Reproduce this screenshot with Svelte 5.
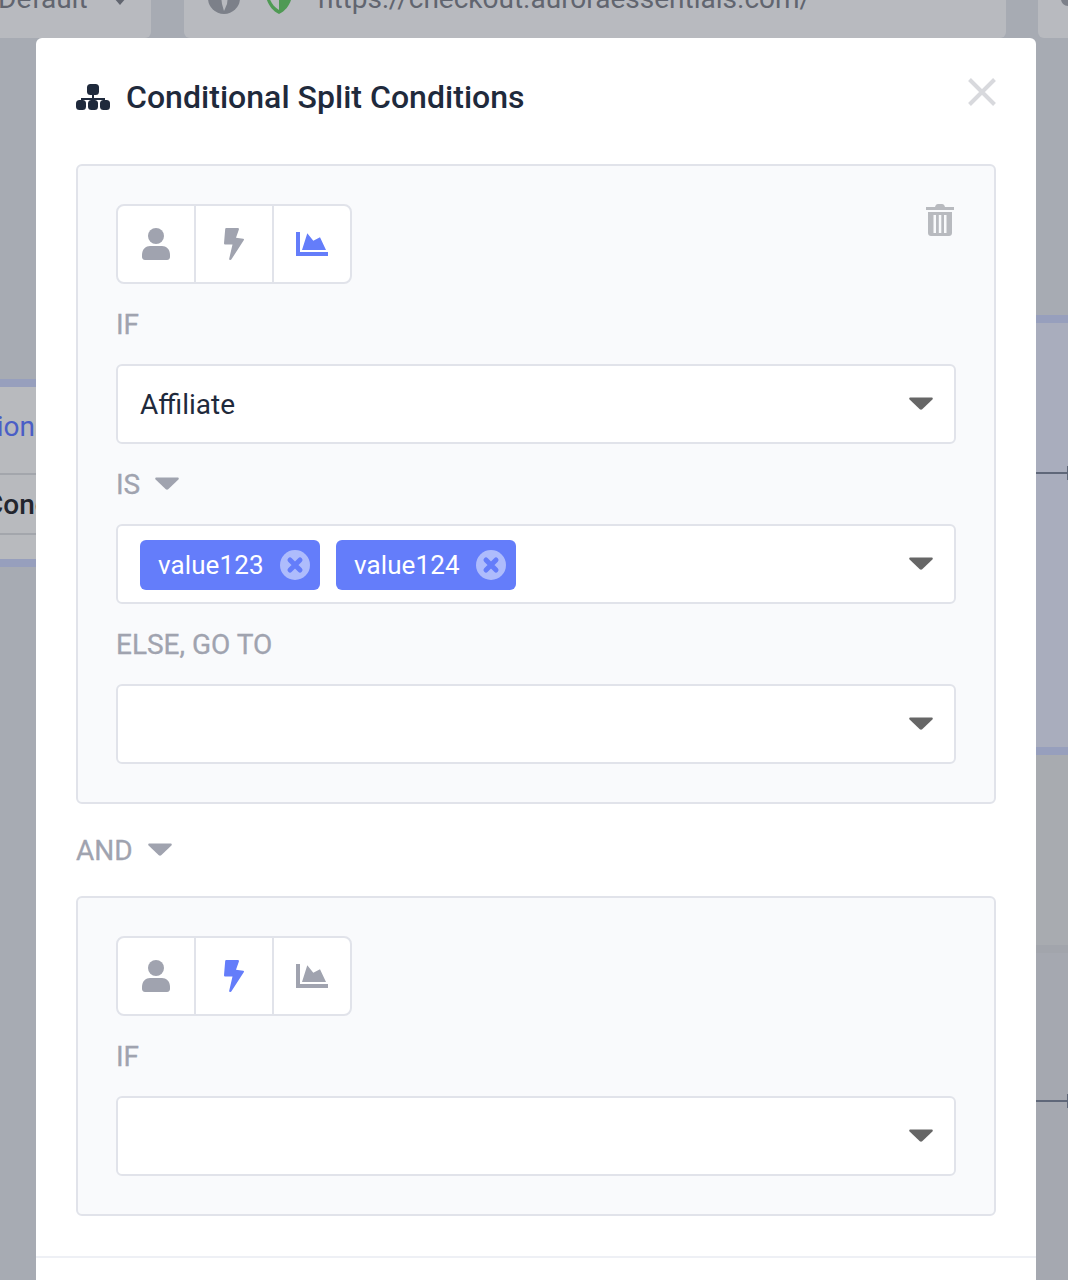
<script>
  const first = 'chart';
  const second = 'bolt';
</script>

{#snippet caret(cls)}
  <svg class={cls} viewBox="0 0 24 13" aria-hidden="true"><path d="M1.500 0.500h21c1.200 0 1.700 1.300.9 2.100L13.200 12.200c-.7.6-1.700.6-2.400 0L.6 2.600C-.2 1.800.3.500 1.500.500z" /></svg>
{/snippet}

{#snippet tabset(active)}
  <div class="tabs">
    <div class="tab">
      <svg class="ico" class:on={active === 'user'} viewBox="0 0 28 32"><circle cx="14" cy="8" r="8" /><path d="M0 27c0-6 4-9 8-9h12c4 0 8 3 8 9v2c0 1.500-1 3-3 3H3c-2 0-3-1.500-3-3z" /></svg>
    </div>
    <div class="tab">
      <svg class="ico" class:on={active === 'bolt'} viewBox="0 0 20 32"><path d="M2.200 0h11.600c.8 0 1.300.7 1.100 1.500L12 9.800l7.200.9c.7.1 1 .8.7 1.400L7.300 31.500c-.7 1-2.300.4-2.100-.8L8.500 16.500H1.200C.4 16.500 0 15.800 0 15.200L1.200 1C1.300.4 1.600 0 2.200 0z" /></svg>
    </div>
    <div class="tab">
      <svg class="ico" class:on={active === 'chart'} viewBox="0 0 32 24"><path d="M0 0h4v20h28v4H0z" /><path d="M6 18 11.300 1.300 17.300 8.700 24 5.300 30 18z" /></svg>
    </div>
  </div>
{/snippet}

{#snippet tag(text)}
  <span class="tag">
    <span>{text}</span>
    <svg viewBox="0 0 30 30"><circle cx="15" cy="15" r="15" fill="#aebcfc" /><path d="M10 10 20 20M20 10 10 20" stroke="#647dfa" stroke-width="5" stroke-linecap="round" /></svg>
  </span>
{/snippet}

<div class="backdrop" aria-hidden="true">
  <div class="card c1"><span>Default</span><svg class="mini" viewBox="0 0 12 7"><path d="M0 0h12L6 7z" /></svg></div>
  <div class="card c2">
    <svg class="globe" viewBox="0 0 32 32"><circle cx="16" cy="16" r="16" fill="#7c8089" /><path d="M13 14h7l-1 8-3 7-2-7z" fill="#b8babf" /></svg>
    <svg class="shield" viewBox="0 0 28 32"><path d="M14 0 28 5c0 12-4 22-14 27C4 27 0 17 0 5z" fill="#4f9a54" /><path d="M14 3v25C7 24 3 16 3 7z" fill="#b8babf" /></svg>
    <span>https://checkout.auroraessentials.com/</span>
  </div>
  <div class="card c3"><i></i></div>

  <div class="left-panel">
    <div class="lp-a"><span class="lp-blue">ion</span></div>
    <div class="lp-b"><span class="lp-dark">Cond</span></div>
    <div class="lp-c"></div>
  </div>

  <div class="right-a"></div>
  <div class="right-b"></div>
  <div class="right-c"></div>
  <div class="link l1"></div>
  <div class="link l2"></div>
</div>

<div class="modal">
  <header class="head">
    <svg class="sitemap" viewBox="0 0 34 26">
      <rect x="11" y="0" width="12" height="11" rx="3.500" />
      <path d="M16 10h2v4h11v4h-2v-2H18v2h-2v-2H7v2H5v-4h11z" />
      <rect x="0" y="16" width="10" height="10" rx="3.500" />
      <rect x="12" y="16" width="10" height="10" rx="3.500" />
      <rect x="24" y="16" width="10" height="10" rx="3.500" />
    </svg>
    <h2>Conditional Split Conditions</h2>
    <svg class="close" viewBox="0 0 28 28"><path d="M1.500 1.500 26.500 26.500M26.500 1.500 1.500 26.500" /></svg>
  </header>

  <section class="panel">
    <svg class="trash" viewBox="0 0 28 32">
      <path d="M0 3h9c.5-2 1.500-3 3-3h4c1.500 0 2.500 1 3 3h9v3H0z" />
      <path fill-rule="evenodd" d="M2 8h24v21c0 1.700-1.300 3-3 3H5c-1.700 0-3-1.300-3-3zM7.500 11v18h2.500V11zM12.800 11v18h2.500V11zM18 11v18h2.500V11z" />
    </svg>
    {@render tabset(first)}
    <div class="label">IF</div>
    <div class="select"><span class="value">Affiliate</span>{@render caret('caret')}</div>
    <div class="label">IS {@render caret('caret-sm')}</div>
    <div class="select tags">
      {@render tag('value123')}
      {@render tag('value124')}
      {@render caret('caret')}
    </div>
    <div class="label">ELSE, GO TO</div>
    <div class="select">{@render caret('caret')}</div>
  </section>

  <div class="label and">AND {@render caret('caret-sm')}</div>

  <section class="panel">
    {@render tabset(second)}
    <div class="label">IF</div>
    <div class="select">{@render caret('caret')}</div>
  </section>

  <div class="foot"></div>
</div>

<style>
  :global(body) {
    margin: 0;
    background: #a7abb3;
    font-family: Roboto, "Liberation Sans", sans-serif;
    overflow: hidden;
  }

  /* dimmed page behind the dialog */
  .backdrop {
    position: absolute;
    inset: 0;
    width: 1068px;
    height: 1280px;
    overflow: hidden;
    background: #a7abb3;
  }
  .card {
    position: absolute;
    top: -40px;
    height: 78px;
    background: #b8babf;
    border-radius: 0 0 6px 6px;
    overflow: hidden;
  }
  .c1 { left: -20px; width: 171px; border-radius: 0 0 6px 0; }
  .c1 span {
    position: absolute;
    left: 18px;
    top: 23px;
    font-size: 28px;
    line-height: 32px;
    color: #61656f;
  }
  .mini { position: absolute; left: 134px; top: 38px; width: 12px; height: 7px; fill: #61656f; }
  .c2 { left: 184px; width: 822px; }
  .globe { position: absolute; left: 24px; top: 22px; width: 32px; height: 32px; }
  .shield { position: absolute; left: 81px; top: 22px; width: 28px; height: 32px; }
  .c2 span {
    position: absolute;
    left: 134px;
    top: 23px;
    font-size: 28px;
    line-height: 32px;
    color: #61656f;
    white-space: nowrap;
  }
  .c3 { left: 1038px; width: 60px; border-radius: 0 0 0 6px; }
  .c3 i {
    position: absolute;
    left: 23px;
    top: 32px;
    width: 14px;
    height: 14px;
    border-radius: 50%;
    background: #7c8089;
  }

  .left-panel {
    position: absolute;
    left: 0;
    top: 379px;
    width: 36px;
    height: 188px;
    background: #b8babe;
    border-top: 8px solid #979fbd;
    border-bottom: 8px solid #979fbd;
    box-sizing: border-box;
    overflow: hidden;
  }
  .lp-a, .lp-b { position: relative; border-bottom: 2px solid #a3a6ac; }
  .lp-a { height: 86px; }
  .lp-b { height: 58px; }
  .lp-blue, .lp-dark {
    position: absolute;
    font-size: 28px;
    line-height: 32px;
    white-space: nowrap;
  }
  .lp-blue { right: 1px; top: 24px; color: #4a5ec6; }
  .lp-dark { left: -15px; top: 14px; color: #23262e; font-weight: 500; }

  .right-a {
    position: absolute;
    left: 1036px;
    top: 315px;
    width: 32px;
    height: 440px;
    box-sizing: border-box;
    background: #a9adbd;
    border-top: 8px solid #979fbd;
    border-bottom: 8px solid #979fbd;
  }
  .right-b {
    position: absolute;
    left: 1036px;
    top: 755px;
    width: 32px;
    height: 190px;
    background: #a8abb0;
  }
  .right-c {
    position: absolute;
    left: 1036px;
    top: 945px;
    width: 32px;
    height: 335px;
    background: #a5a8b0;
    border-top: 8px solid #a2a5ac;
    box-sizing: border-box;
  }
  .link {
    position: absolute;
    left: 1036px;
    width: 31px;
    height: 2px;
    background: #5f6779;
  }
  .link::after {
    content: "";
    position: absolute;
    right: -1px;
    top: -6px;
    width: 1px;
    height: 14px;
    background: #5f6779;
  }
  .l1 { top: 472px; }
  .l2 { top: 1100px; }

  /* dialog */
  .modal {
    position: relative;
    box-sizing: border-box;
    width: 1000px;
    height: 1242px;
    margin: 38px 0 0 36px;
    padding: 0 40px;
    background: #fff;
    border-radius: 6px 6px 0 0;
    overflow: hidden;
  }
  .head {
    display: flex;
    align-items: center;
    height: 126px;
    position: relative;
  }
  .sitemap {
    width: 34px;
    height: 26px;
    margin-right: 16px;
    margin-top: -8px;
    fill: #1f2a3c;
  }
  h2 {
    margin: -8px 0 0;
    font-size: 32px;
    line-height: 40px;
    font-weight: 500;
    letter-spacing: 0.03px;
    color: #1f2a3c;
    flex: 1;
  }
  .close {
    position: absolute;
    right: 0;
    top: 40px;
    width: 28px;
    height: 28px;
    fill: none;
    stroke: #d8d9dd;
    stroke-width: 4;
  }

  .panel {
    position: relative;
    box-sizing: border-box;
    display: flex;
    flex-direction: column;
    padding: 38px;
    background: #f9fafc;
    border: 2px solid #e1e3ea;
    border-radius: 6px;
  }
  .trash {
    position: absolute;
    right: 40px;
    top: 38px;
    width: 28px;
    height: 32px;
    fill: #b8babf;
  }

  .tabs {
    display: flex;
    width: 236px;
    height: 80px;
    box-sizing: border-box;
    background: #fff;
    border: 2px solid #e1e3ea;
    border-radius: 8px;
  }
  .tab {
    flex: 1;
    display: flex;
    align-items: center;
    justify-content: center;
  }
  .tab + .tab { border-left: 2px solid #e1e3ea; }
  .ico { fill: #a0a3af; }
  .ico.on { fill: #647dfa; }
  .tab:nth-child(1) .ico { width: 28px; height: 32px; }
  .tab:nth-child(2) .ico { width: 20px; height: 32px; }
  .tab:nth-child(3) .ico { width: 32px; height: 24px; }

  .label {
    display: flex;
    align-items: center;
    gap: 15px;
    height: 80px;
    font-size: 28px;
    color: #a0a3af;
    -webkit-text-stroke: 0.3px #a0a3af;
  }
  .label.and { height: 92px; }

  .select {
    display: flex;
    align-items: center;
    position: relative;
    box-sizing: border-box;
    height: 80px;
    padding: 0 22px;
    background: #fff;
    border: 2px solid #e1e3ea;
    border-radius: 6px;
  }
  .value { font-size: 28px; color: #1f2a3c; }
  .tags { gap: 16px; padding-top: 2px; }
  .caret {
    position: absolute;
    right: 21px;
    top: 31px;
    width: 24px;
    height: 13px;
    fill: #666;
  }
  .caret-sm {
    width: 24px;
    height: 13px;
    fill: #a0a3af;
    margin-top: -1px;
  }
  .tag {
    display: flex;
    align-items: center;
    justify-content: space-between;
    box-sizing: border-box;
    width: 180px;
    height: 50px;
    padding: 0 10px 0 18px;
    background: #647dfa;
    border-radius: 6px;
    color: #fff;
    font-size: 26px;
    letter-spacing: 0.1px;
  }
  .tag svg { width: 30px; height: 30px; }

  .foot {
    position: absolute;
    left: 0;
    right: 0;
    top: 1218px;
    height: 2px;
    background: #eef0f5;
  }
</style>
